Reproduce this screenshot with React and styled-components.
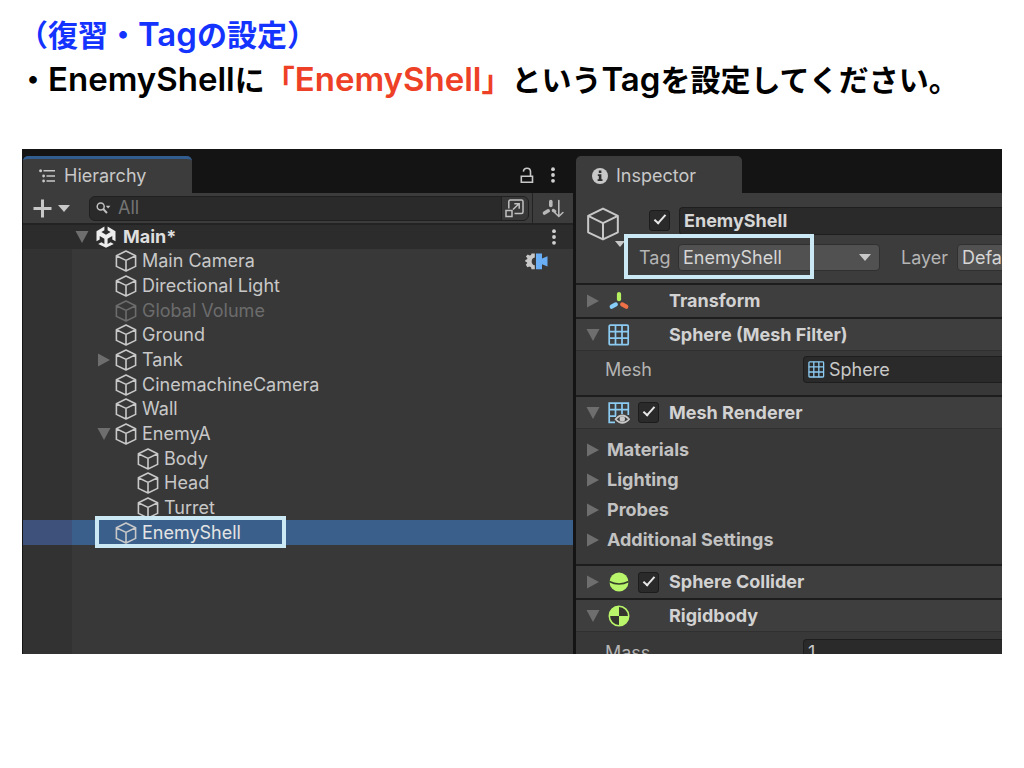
import React from "react";
import styled, { createGlobalStyle, ThemeProvider } from "styled-components";

const theme = {
  colors: {
    frame: "#141414",
    panel: "#383838",
    header: "#3e3e3e",
    bar: "#3c3c3c",
    field: "#2a2a2a",
    gutter: "#323232",
    line: "#1d1d1d",
    softLine: "#303030",
    text: "#c8c8c8",
    label: "#b4b4b4",
    faded: "#6c6c6c",
    selected: "#3a5f8a",
    selectedGutter: "#3d517a",
    marker: "#cbe8f5",
  },
};

const treeItems = [
  { name: "Main Camera", camera: true },
  { name: "Directional Light" },
  { name: "Global Volume", inactive: true },
  { name: "Ground" },
  { name: "Tank", fold: "closed" },
  { name: "CinemachineCamera" },
  { name: "Wall" },
  { name: "EnemyA", fold: "open" },
  { name: "Body", depth: 1 },
  { name: "Head", depth: 1 },
  { name: "Turret", depth: 1 },
  { name: "EnemyShell", selected: true },
];

const rendererGroups = ["Materials", "Lighting", "Probes", "Additional Settings"];

const CubeIcon = ({ size = 22, stroke = 1.6 }) => (
  <svg width={size} height={size} viewBox="0 0 22 22" fill="none" stroke="currentColor" strokeWidth={stroke} strokeLinejoin="round">
    <path d="M11 1 20.6 5.8V16.4L11 21 1.4 16.4V5.8ZM1.4 5.8 11 10.4 20.6 5.8M11 10.4V21" />
  </svg>
);

const FoldIcon = ({ open }) => (
  <svg width="14" height="14" viewBox="0 0 14 14" fill="#6e6e6e">
    <path d={open ? "M0.5 1H13.5L7 13Z" : "M1 0.5V13.5L13 7Z"} />
  </svg>
);

const CaretIcon = ({ width = 12, height = 7 }) => (
  <svg width={width} height={height} viewBox="0 0 12 7" fill="#c8c8c8">
    <path d="M0 0H12L6 7Z" />
  </svg>
);

const KebabIcon = () => (
  <svg width="6" height="16" viewBox="0 0 6 16" fill="#d0d0d0">
    <circle cx="3" cy="2.2" r="1.9" />
    <circle cx="3" cy="8" r="1.9" />
    <circle cx="3" cy="13.8" r="1.9" />
  </svg>
);

const ListIcon = () => (
  <svg width="17" height="14" viewBox="0 0 17 14" fill="#c8c8c8">
    <circle cx="1.6" cy="1.8" r="1.5" />
    <circle cx="4.6" cy="7" r="1.4" />
    <circle cx="4.6" cy="12" r="1.4" />
    <path d="M4.5 1H16V2.6H4.5ZM7.5 6.2H16V7.8H7.5ZM7.5 11.2H16V12.8H7.5Z" />
  </svg>
);

const LockIcon = () => (
  <svg width="14" height="17" viewBox="0 0 14 17" fill="none" stroke="#c8c8c8" strokeWidth="1.6">
    <path d="M1.3 9.3H12.5V15.3H1.3Z" />
    <path d="M3.4 4.6C3.6 2.6 5 1.2 7 1.2 9.2 1.2 10.5 2.6 10.5 4.8V9" />
  </svg>
);

const InfoIcon = () => (
  <svg width="16" height="16" viewBox="0 0 16 16">
    <circle cx="8" cy="8" r="8" fill="#c8c8c8" />
    <path d="M6.8 2.5H9.4V5H6.8ZM5.8 6.3H9.4V11.3H10.5V13H5.6V11.3H6.8V7.9H5.8Z" fill="#2e2e2e" />
  </svg>
);

const PlusIcon = () => (
  <svg width="19" height="19" viewBox="0 0 19 19" fill="#c8c8c8">
    <path d="M8 0.5H11V8H18.5V11H11V18.5H8V11H0.5V8H8Z" />
  </svg>
);

const SearchIcon = () => (
  <svg width="15" height="12" viewBox="0 0 15 12" fill="none" stroke="#c0c0c0" strokeWidth="1.5">
    <circle cx="4.7" cy="4.5" r="3.5" />
    <path d="M7.2 7 11 11" strokeWidth="1.9" />
    <path d="M9.8 3.8H14.4L12.1 6.5Z" fill="#c0c0c0" stroke="none" />
  </svg>
);

const PickerIcon = () => (
  <svg width="20" height="19" viewBox="0 0 20 19" fill="none" stroke="#c0c0c0" strokeWidth="1.5">
    <path d="M3.8 9.5V2.5Q3.8 1 5.3 1H16.5Q18 1 18 2.5V13Q18 14.5 16.5 14.5H9.5" />
    <path d="M1 11.5H7V17.5H1Z" />
    <path d="M8 10.5 14 4.8M9.3 4.7H14.2V9.7" />
  </svg>
);

const AxisSortIcon = () => (
  <svg width="22" height="19" viewBox="0 0 22 19" fill="none" stroke="#b8b8b8" strokeLinecap="round">
    <path d="M8.8 2.5V6.5" strokeWidth="3.6" />
    <path d="M6.2 11.8 2.5 14" strokeWidth="3.6" />
    <path d="M11.3 11.5 12.8 12.3" strokeWidth="3.2" />
    <path d="M16.8 1.5V17M12.7 13.5 16.8 17.5 20.9 13.5" strokeWidth="1.6" />
  </svg>
);

const UnityIcon = () => (
  <svg width="20" height="22" viewBox="0 0 20 22">
    <path
      d="M8.4 0.5V4.2L5.4 6 10 8.7 14.600 6 11.600 4.200V0.500L19.500 5.200V15.200L16.300 13.400V10L11.600 12.700V18L14.600 16.300 17.800 18 10 21.800 2.200 18 5.400 16.300 8.400 18V12.700L3.700 10V13.400L0.500 15.200V5.200Z"
      fill="#ededed"
    />
  </svg>
);

const CinemachineIcon = () => (
  <svg width="23" height="17" viewBox="0 0 23 17">
    <path
      d="M9.8 0.5V4.5A4 4 0 0 0 9.8 12.3V16.3H6.5L6 14.2 4.5 13.4 2.4 14.2 0.8 11.8 2.1 10.2V9.4L0.3 8.5V6.9L2.1 6.3 2.4 5.3 0.9 3.5 2.7 1.5 4.7 2.4 6 1.9 6.6 0.5Z"
      fill="#c8c8c8"
    />
    <path d="M11 0.5H17V5.5L22.5 3.2V13.5L17 11.2V16.3H11Z" fill="#6aaef5" />
  </svg>
);

const TransformIcon = () => (
  <svg width="22" height="20" viewBox="0 0 22 20" fill="none" strokeWidth="4.2" strokeLinecap="round">
    <path d="M11 3V8.2" stroke="#b5f060" />
    <path d="M7.8 13.4 3.7 15.7" stroke="#86cdf7" />
    <path d="M14.2 13.4 18.3 15.7" stroke="#f07048" />
  </svg>
);

const MeshIcon = ({ size = 22 }) => (
  <svg width={size} height={size} viewBox="0 0 22 22" fill="none" stroke="#8ccbf2" strokeWidth="1.7">
    <rect x="1.2" y="1.2" width="19" height="19.5" rx="1" />
    <path d="M7.5 1V21M14 1V21M1 7.7H20.5M1 14.2H20.5" />
  </svg>
);

const MeshRendererIcon = () => (
  <svg width="22" height="22" viewBox="0 0 22 22" fill="none">
    <path d="M7 20.3H1.2V1.2H20.3V13M7.5 1V14M14 1V12M1 7.7H20.5M1 14.2H8" stroke="#8ccbf2" strokeWidth="1.7" />
    <path d="M6.5 17.2Q14.2 8 22 17.2 14.2 26 6.5 17.2Z" fill="#3e3e3e" />
    <path d="M7.5 17.2Q14.2 9.5 21.2 17.2 14.2 24.5 7.5 17.2Z" stroke="#c8c8c8" strokeWidth="1.6" />
    <circle cx="14.3" cy="17" r="2.7" fill="#c8c8c8" />
  </svg>
);

const ColliderIcon = () => (
  <svg width="22" height="22" viewBox="0 0 22 22">
    <circle cx="11" cy="11" r="9.5" fill="#b9f56a" />
    <path d="M1.3 10.5Q11 15.5 20.7 10.5" fill="none" stroke="#35402a" strokeWidth="1.5" />
  </svg>
);

const RigidbodyIcon = () => (
  <svg width="22" height="22" viewBox="0 0 22 22">
    <circle cx="11" cy="11" r="9.7" fill="#35352f" stroke="#b9f56a" strokeWidth="1.6" />
    <path d="M11 11V1A10 10 0 0 0 1 11ZM11 11V21A10 10 0 0 0 21 11Z" fill="#b9f56a" />
  </svg>
);

const Component = ({ icon, title, open, enabled }) => (
  <ComponentHeader $open={open}>
    <FoldButton aria-label={`Toggle ${title}`}>
      <FoldIcon open={open} />
    </FoldButton>
    <IconSlot>{icon}</IconSlot>
    <CheckSlot>{enabled && <Checkbox type="checkbox" aria-label={`${title} enabled`} defaultChecked />}</CheckSlot>
    <h3>{title}</h3>
  </ComponentHeader>
);

const Hierarchy = () => (
  <Panel>
    <TabBar>
      <Tab $active>
        <ListIcon />
        Hierarchy
      </Tab>
      <TabActions>
        <IconButton aria-label="Lock">
          <LockIcon />
        </IconButton>
        <IconButton aria-label="Hierarchy options">
          <KebabIcon />
        </IconButton>
      </TabActions>
    </TabBar>
    <Toolbar>
      <AddButton aria-label="Add object">
        <PlusIcon />
        <CaretIcon />
      </AddButton>
      <SearchField>
        <SearchIcon />
        <input type="text" aria-label="Search hierarchy" placeholder="All" />
        <PickerButton aria-label="Open search">
          <PickerIcon />
        </PickerButton>
      </SearchField>
      <SortButton aria-label="Sort objects">
        <AxisSortIcon />
      </SortButton>
    </Toolbar>
    <SceneRow>
      <FoldIcon open />
      <UnityIcon />
      <strong>Main*</strong>
      <IconButton aria-label="Scene options">
        <KebabIcon />
      </IconButton>
    </SceneRow>
    <TreeArea>
      <Tree>
        {treeItems.map((item) => (
          <TreeRow key={item.name} $selected={item.selected} $inactive={item.inactive}>
            <Gutter $selected={item.selected} />
            <RowContent $depth={item.depth || 0}>
              <FoldSlot>{item.fold && <FoldIcon open={item.fold === "open"} />}</FoldSlot>
              <CubeIcon />
              <span>{item.name}</span>
              {item.camera && <CinemachineIcon />}
              {item.selected && <RowMarker />}
            </RowContent>
          </TreeRow>
        ))}
      </Tree>
    </TreeArea>
  </Panel>
);

const Inspector = () => (
  <Panel>
    <TabBar>
      <Tab>
        <InfoIcon />
        Inspector
      </Tab>
    </TabBar>
    <ObjectHeader>
      <ObjectIcon aria-label="Select icon">
        <CubeIcon size={34} stroke={1.3} />
        <CaretIcon width={10} height={6} />
      </ObjectIcon>
      <ObjectFields>
        <NameRow>
          <Checkbox type="checkbox" aria-label="Active" defaultChecked />
          <NameInput type="text" aria-label="Name" defaultValue="EnemyShell" />
        </NameRow>
        <TagRow>
          <label htmlFor="tag">Tag</label>
          <SelectBox>
            <select id="tag" defaultValue="EnemyShell">
              <option>EnemyShell</option>
            </select>
            <CaretIcon />
          </SelectBox>
          <label htmlFor="layer">Layer</label>
          <SelectBox>
            <select id="layer" defaultValue="Default">
              <option>Default</option>
            </select>
            <CaretIcon />
          </SelectBox>
          <TagMarker />
        </TagRow>
      </ObjectFields>
    </ObjectHeader>

    <Component title="Transform" icon={<TransformIcon />} />
    <Component title="Sphere (Mesh Filter)" icon={<MeshIcon />} open />
    <PropertyRow>
      <label htmlFor="mesh">Mesh</label>
      <ValueField>
        <MeshIcon size={17} />
        <input id="mesh" type="text" defaultValue="Sphere" />
      </ValueField>
    </PropertyRow>
    <Component title="Mesh Renderer" icon={<MeshRendererIcon />} open enabled />
    <GroupList>
      {rendererGroups.map((group) => (
        <GroupButton key={group}>
          <FoldIcon />
          {group}
        </GroupButton>
      ))}
    </GroupList>
    <Component title="Sphere Collider" icon={<ColliderIcon />} enabled />
    <Component title="Rigidbody" icon={<RigidbodyIcon />} open />
    <PropertyRow $clipped>
      <label htmlFor="mass">Mass</label>
      <ValueField>
        <input id="mass" type="text" defaultValue="1" />
      </ValueField>
    </PropertyRow>
  </Panel>
);

export default function App() {
  return (
    <ThemeProvider theme={theme}>
      <GlobalStyle />
      <Slide>
        <Title>
          （復習・<Latin>Tag</Latin>の設定）
        </Title>
        <Lead>
          ・<Latin>EnemyShell</Latin>に
          <Accent>
            「<Latin>EnemyShell</Latin>」
          </Accent>
          という<Latin>Tag</Latin>を設定してください。
        </Lead>
        <Editor>
          <Hierarchy />
          <Inspector />
        </Editor>
      </Slide>
    </ThemeProvider>
  );
}

const GlobalStyle = createGlobalStyle`
  *, *::before, *::after {
    box-sizing: border-box;
  }

  body {
    margin: 0;
    background: #fff;
    font-family: Inter, "Noto Sans CJK JP", sans-serif;
    font-optical-sizing: none;
  }

  h1, h3, p, ul {
    margin: 0;
    padding: 0;
  }

  button, input, select {
    margin: 0;
    padding: 0;
    border: 0;
    background: none;
    color: inherit;
    font: inherit;
    font-optical-sizing: none;
    outline: none;
  }

  svg {
    display: block;
    flex: none;
  }
`;

const Slide = styled.main`
  padding: 11px 22px 0;
`;

const Title = styled.h1`
  margin: 0 -4px;
  color: #1433ff;
  font: 700 30px/45px "Noto Sans CJK JP", sans-serif;
`;

const Lead = styled.p`
  margin: 0 -4px;
  color: #000;
  font: 700 30px/45px "Noto Sans CJK JP", sans-serif;
`;

const Latin = styled.span`
  font-family: Inter, sans-serif;
  font-size: 33px;
  font-weight: 600;
  line-height: 1;
  font-optical-sizing: auto;
`;

const Accent = styled.span`
  color: #ee4026;
`;

const Editor = styled.section`
  display: grid;
  grid-template-columns: 551fr 427fr;
  gap: 2px;
  margin-top: 48px;
  overflow: hidden;
  background: ${({ theme }) => theme.colors.frame};
  color: ${({ theme }) => theme.colors.text};
  font-size: 18px;
  line-height: 24px;
`;

const Panel = styled.div`
  display: flex;
  flex-direction: column;
  min-width: 0;
  overflow: hidden;
  border-left: 1px solid ${({ theme }) => theme.colors.frame};
  background: ${({ theme }) => theme.colors.panel};
`;

const TabBar = styled.div`
  display: flex;
  align-items: flex-end;
  justify-content: space-between;
  height: 44px;
  background: ${({ theme }) => theme.colors.frame};
`;

const Tab = styled.div`
  display: flex;
  align-items: center;
  gap: 8px;
  width: ${({ $active }) => ($active ? 169 : 166)}px;
  height: 37px;
  padding-left: 16px;
  border-top: 3px solid ${({ $active, theme }) => ($active ? "#315d90" : theme.colors.bar)};
  border-radius: 5px 5px 0 0;
  background: ${({ theme }) => theme.colors.bar};
`;

const TabActions = styled.div`
  display: flex;
  align-items: center;
  gap: 16px;
  height: 36px;
  padding-right: 17px;
`;

const IconButton = styled.button`
  display: flex;
  align-items: center;
`;

const Toolbar = styled.div`
  display: flex;
  align-items: center;
  height: 32px;
  border-bottom: 2px solid #232323;
  background: ${({ theme }) => theme.colors.bar};
`;

const AddButton = styled.button`
  display: flex;
  align-items: center;
  gap: 6px;
  width: 66px;
  padding-left: 10px;
`;

const SearchField = styled.div`
  display: flex;
  flex: 1;
  align-items: center;
  height: 25px;
  padding-left: 6px;
  overflow: hidden;
  border: 1px solid #202020;
  border-radius: 6px;
  background: ${({ theme }) => theme.colors.field};

  input {
    flex: 1;
    min-width: 0;
    margin-left: 7px;
  }

  input::placeholder {
    color: #747474;
    opacity: 1;
  }
`;

const PickerButton = styled.button`
  display: flex;
  align-items: center;
  justify-content: center;
  width: 27px;
  height: 100%;
  border-left: 1px solid #202020;
  background: ${({ theme }) => theme.colors.panel};
`;

const SortButton = styled.button`
  display: flex;
  align-items: center;
  justify-content: center;
  width: 41px;
  height: 100%;
  margin-left: 3px;
  border-left: 1px solid #232323;
`;

const SceneRow = styled.div`
  display: flex;
  align-items: center;
  height: 24px;
  padding: 0 16px 0 52px;
  background: #2c2c2c;

  strong {
    flex: 1;
    margin-left: 7px;
    color: #dedede;
    font-weight: 700;
  }

  svg + svg {
    margin-left: 7px;
  }
`;

const TreeArea = styled.div`
  flex: 1;
  background: linear-gradient(
    to right,
    ${({ theme }) => theme.colors.gutter} 49px,
    ${({ theme }) => theme.colors.panel} 49px
  );
`;

const Tree = styled.ul`
  display: grid;
  grid-template-rows: repeat(12, 1fr);
  height: 296px;
  list-style: none;
`;

const TreeRow = styled.li`
  display: flex;
  min-height: 0;
  background: ${({ $selected, theme }) => ($selected ? theme.colors.selected : "transparent")};
  color: ${({ $selected, $inactive, theme }) => ($inactive ? theme.colors.faded : $selected ? "#e4e4e4" : theme.colors.text)};

  svg {
    color: ${({ $inactive, theme }) => ($inactive ? theme.colors.faded : theme.colors.text)};
  }
`;

const Gutter = styled.div`
  width: 49px;
  background: ${({ $selected, theme }) => ($selected ? theme.colors.selectedGutter : "transparent")};
`;

const RowContent = styled.div`
  position: relative;
  display: flex;
  flex: 1;
  align-items: center;
  padding: 0 25px 0 ${({ $depth }) => 25 + $depth * 22}px;

  span {
    flex: 1;
    margin-left: 5px;
  }
`;

const FoldSlot = styled.div`
  width: 18px;
`;

/* frame drawn over the row that has to be picked */
const RowMarker = styled.div`
  position: absolute;
  top: -4px;
  bottom: -3px;
  left: 23px;
  width: 191px;
  border: 4px solid ${({ theme }) => theme.colors.marker};
`;

const ObjectHeader = styled.div`
  display: flex;
  height: 92px;
  padding-top: 14px;
  border-bottom: 2px solid ${({ theme }) => theme.colors.line};
  background: ${({ theme }) => theme.colors.bar};
`;

const ObjectIcon = styled.button`
  display: flex;
  flex-direction: column;
  align-items: flex-start;
  width: 49px;
  height: 40px;
  padding-left: 10px;

  svg + svg {
    align-self: flex-end;
  }
`;

const ObjectFields = styled.div`
  flex: 1;
  min-width: 0;
`;

const NameRow = styled.div`
  display: flex;
  align-items: center;
  gap: 9px;
  height: 27px;
  padding-left: 24px;
`;

const Checkbox = styled.input`
  appearance: none;
  flex: none;
  width: 21px;
  height: 21px;
  border: 1px solid #1c1c1c;
  border-radius: 3px;
  background: ${({ theme }) => theme.colors.field};

  &:checked::after {
    content: "";
    display: block;
    width: 6px;
    height: 12px;
    margin: 1px 0 0 7px;
    border: solid #e8e8e8;
    border-width: 0 2px 2px 0;
    transform: rotate(42deg);
  }
`;

const NameInput = styled.input`
  flex: 1;
  min-width: 0;
  height: 28px;
  padding-left: 4px;
  border: 1px solid #1e1e1e;
  border-right: 0;
  border-radius: 4px 0 0 4px;
  background: ${({ theme }) => theme.colors.field};
  color: #d6d6d6;
  font-weight: 700;
`;

const TagRow = styled.div`
  position: relative;
  display: flex;
  align-items: center;
  height: 27px;
  margin-top: 10px;
  padding-left: 14px;
  color: ${({ theme }) => theme.colors.label};

  label {
    flex: none;
    width: 39px;
  }

  label ~ label {
    width: 56px;
    margin-left: 21px;
  }
`;

const SelectBox = styled.div`
  display: flex;
  flex: none;
  align-items: center;
  width: 202px;
  height: 27px;
  padding-right: 8px;
  border: 1px solid #303030;
  border-radius: 4px;
  background: #515151;
  color: #d6d6d6;

  select {
    flex: 1;
    appearance: none;
    height: 100%;
    padding-left: 4px;
  }
`;

/* frame drawn over the tag setting */
const TagMarker = styled.div`
  position: absolute;
  top: -10px;
  left: -1px;
  width: 190px;
  height: 45px;
  border: 4px solid ${({ theme }) => theme.colors.marker};
`;

const ComponentHeader = styled.div`
  display: flex;
  flex: none;
  align-items: center;
  height: ${({ $open }) => ($open ? 32 : 34)}px;
  border-bottom: ${({ $open, theme }) => ($open ? `1px solid ${theme.colors.softLine}` : `2px solid ${theme.colors.line}`)};
  background: ${({ theme }) => theme.colors.header};

  h3 {
    color: #d2d2d2;
    font-size: 18px;
    font-weight: 700;
    line-height: 24px;
  }
`;

const FoldButton = styled.button`
  display: flex;
  width: 32px;
  padding-left: 10px;
`;

const IconSlot = styled.div`
  width: 30px;
`;

const CheckSlot = styled.div`
  display: flex;
  width: 31px;
`;

const PropertyRow = styled.div`
  display: flex;
  flex: none;
  align-items: flex-start;
  height: ${({ $clipped }) => ($clipped ? 22 : 46)}px;
  padding-top: ${({ $clipped }) => ($clipped ? 7 : 5)}px;
  overflow: hidden;
  border-bottom: ${({ $clipped, theme }) => ($clipped ? "0" : `2px solid ${theme.colors.line}`)};
  color: ${({ theme }) => theme.colors.label};

  label {
    flex: none;
    width: 227px;
    padding: 2px 0 0 29px;
  }
`;

const ValueField = styled.div`
  display: flex;
  flex: 1;
  align-items: center;
  gap: 4px;
  height: 27px;
  padding-left: 4px;
  border: 1px solid #1e1e1e;
  border-right: 0;
  border-radius: 4px 0 0 4px;
  background: ${({ theme }) => theme.colors.field};
  color: ${({ theme }) => theme.colors.text};

  input {
    flex: 1;
    min-width: 0;
  }
`;

const GroupList = styled.div`
  display: flex;
  flex: none;
  flex-direction: column;
  align-items: flex-start;
  gap: 6px;
  padding: 9px 0 12px;
  border-bottom: 2px solid ${({ theme }) => theme.colors.line};
`;

const GroupButton = styled.button`
  display: flex;
  align-items: center;
  gap: 7px;
  height: 24px;
  padding-left: 10px;
  color: #c2c2c2;
  font-weight: 700;
`;
